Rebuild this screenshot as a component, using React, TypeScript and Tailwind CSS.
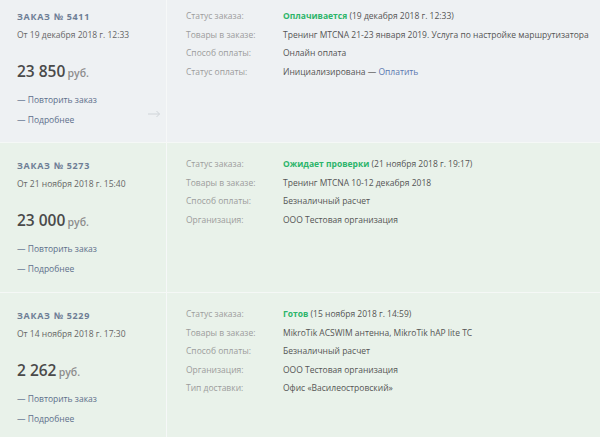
import React from "react"

type Order = {
    num: string
    date: string
    price: string
    status: string
    statusDate: string
    rows: { label: string; value: React.ReactNode }[]
    bg: string
    h: string
    first?: boolean
}

const orders: Order[] = [
    {
        num: "5411",
        date: "От 19 декабря 2018 г. 12:33",
        price: "23 850",
        status: "Оплачивается",
        statusDate: "(19 декабря 2018 г. 12:33)",
        bg: "bg-[#eef1f3]",
        h: "h-[143px]",
        first: true,
        rows: [
            { label: "Товары в заказе:", value: "Тренинг MTCNA 21-23 января 2019. Услуга по настройке маршрутизатора" },
            { label: "Способ оплаты:", value: "Онлайн оплата" },
            {
                label: "Статус оплаты:",
                value: (
                    <>
                        Инициализирована — <span className="text-[#5b78b0]">Оплатить</span>
                    </>
                ),
            },
        ],
    },
    {
        num: "5273",
        date: "От 21 ноября 2018 г. 15:40",
        price: "23 000",
        status: "Ожидает проверки",
        statusDate: "(21 ноября 2018 г. 19:17)",
        bg: "bg-[#e9f2ea]",
        h: "h-[150px]",
        rows: [
            { label: "Товары в заказе:", value: "Тренинг MTCNA 10-12 декабря 2018" },
            { label: "Способ оплаты:", value: "Безналичный расчет" },
            { label: "Организация:", value: "ООО Тестовая организация" },
        ],
    },
    {
        num: "5229",
        date: "От 14 ноября 2018 г. 17:30",
        price: "2 262",
        status: "Готов",
        statusDate: "(15 ноября 2018 г. 14:59)",
        bg: "bg-[#e9f2ea]",
        h: "h-[150px]",
        rows: [
            { label: "Товары в заказе:", value: "MikroTik ACSWIM антенна, MikroTik hAP lite TC" },
            { label: "Способ оплаты:", value: "Безналичный расчет" },
            { label: "Организация:", value: "ООО Тестовая организация" },
            { label: "Тип доставки:", value: "Офис «Василеостровский»" },
        ],
    },
]

export default function App() {
    return (
        <div className="w-[600px] h-[437px] overflow-hidden font-['Open_Sans',sans-serif] text-[8.5px]">
            {orders.map((o) => (
                <div key={o.num} className={`flex ${o.h} ${o.bg} border-b border-[#f5f8f6]`}>
                    {/* Left */}
                    <div className={`relative w-[167px] shrink-0 border-r border-[#f6f8f8] pl-[17px] ${o.first ? "pt-[11px]" : "pt-[17px]"}`}>
                        <div className="leading-[12px] text-[9px] font-bold tracking-[0.7px] text-[#6d7d95]">
                            ЗАКАЗ № {o.num}
                        </div>
                        <div className="mt-[6px] leading-[12px] text-[#666]">{o.date}</div>
                        <div className="mt-[18px] leading-[24px] text-[#4a4a4a]">
                            <span className="text-[15.5px] font-semibold">{o.price}</span>{" "}
                            <span className="text-[10.5px] font-semibold text-[#8d8d8d]">руб.</span>
                        </div>
                        <div className="mt-[8px] leading-[12px] text-[#5d6f8b]">— Повторить заказ</div>
                        <div className="mt-[8px] leading-[12px] text-[#5d6f8b]">— Подробнее</div>
                        {o.first && (
                            <svg className="absolute right-[5px] top-[110px]" width="13" height="8" viewBox="0 0 13 8">
                                <path d="M0 4h11.5M8.5 1l3 3-3 3" fill="none" stroke="#cfd4d8" strokeWidth="1" />
                            </svg>
                        )}
                    </div>
                    {/* Right */}
                    <div className={`flex-1 pl-[19px] leading-[18.5px] ${o.first ? "pt-[7px]" : "pt-[12px]"}`}>
                        <div className="flex">
                            <div className="w-[97px] shrink-0 text-[#9c9c9c]">Статус заказа:</div>
                            <div className="text-[#555]">
                                <span className="font-bold text-[#2db56a]">{o.status}</span> {o.statusDate}
                            </div>
                        </div>
                        {o.rows.map((r) => (
                            <div key={r.label} className="flex">
                                <div className="w-[97px] shrink-0 text-[#9c9c9c]">{r.label}</div>
                                <div className="text-[#555] whitespace-nowrap">{r.value}</div>
                            </div>
                        ))}
                    </div>
                </div>
            ))}
        </div>
    )
}
